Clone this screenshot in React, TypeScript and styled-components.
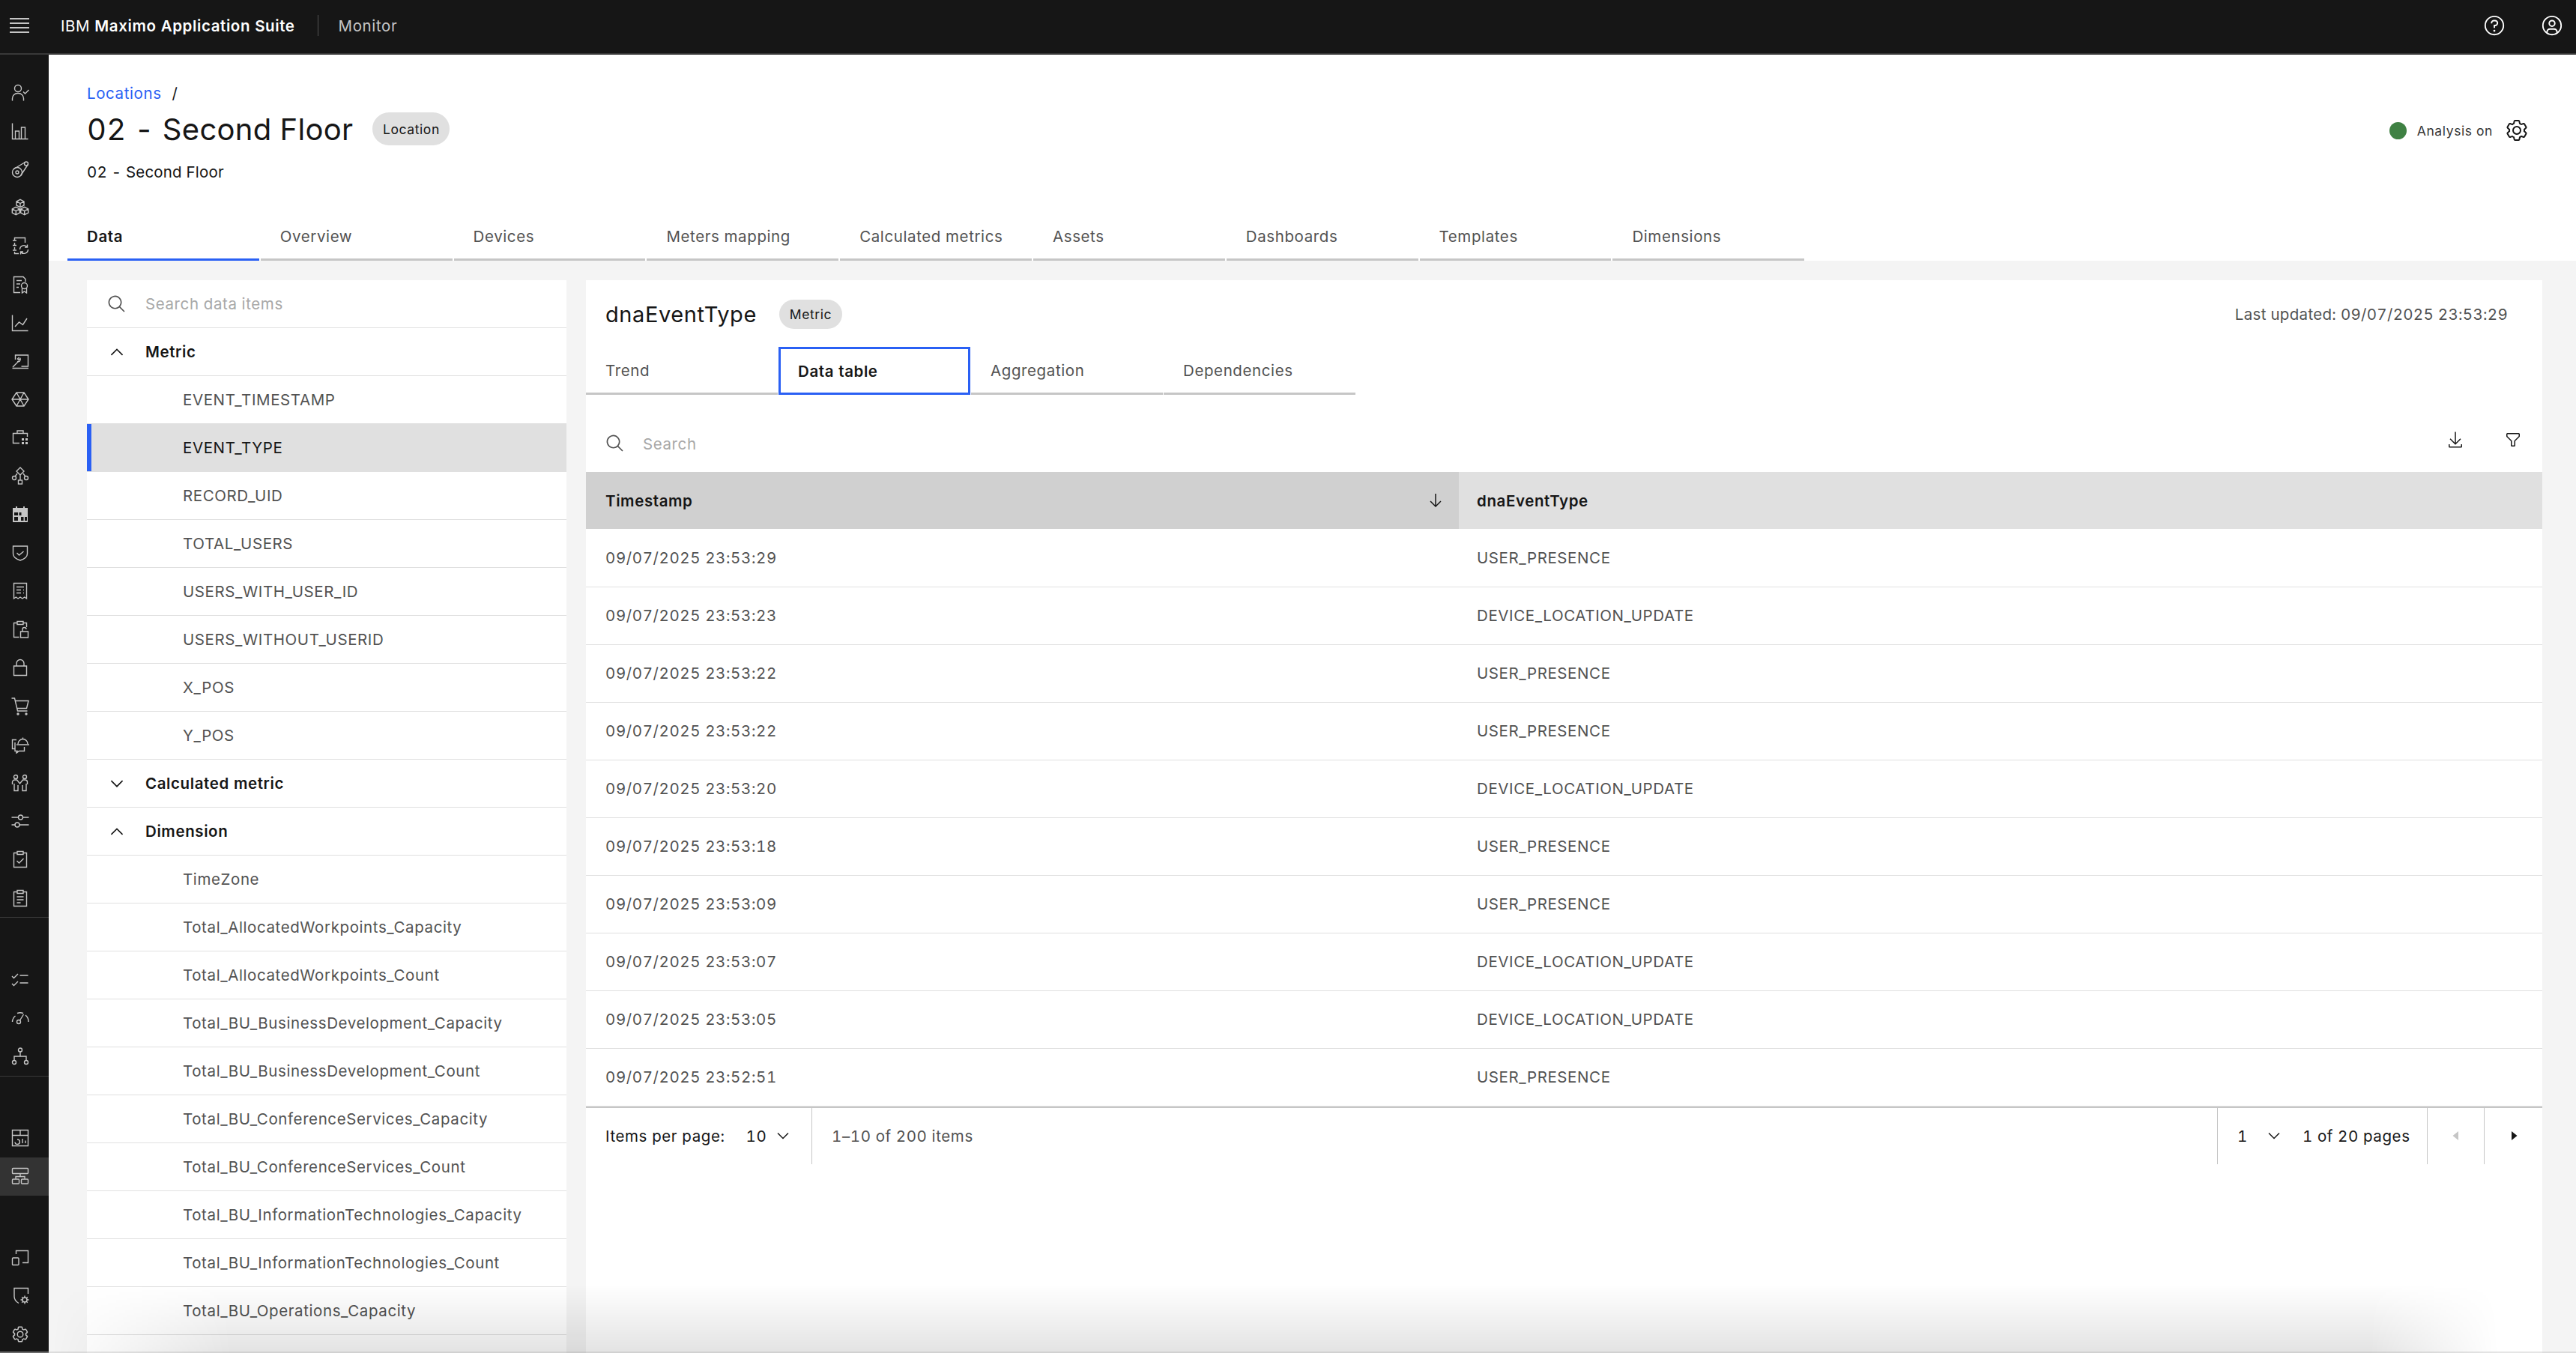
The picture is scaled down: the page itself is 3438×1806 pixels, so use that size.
import { ReactNode } from 'react';
import styled, { createGlobalStyle } from 'styled-components';

const GlobalStyle = createGlobalStyle`
  html, body, #root {
    margin: 0;
    height: 100%;
  }

  body {
    font-family: 'Inter', 'Noto Sans', sans-serif;
    font-size: 20.5px;
    font-variant-numeric: tabular-nums;
    letter-spacing: 0.6px;
    color: #161616;
    background: #f4f4f4;
    overflow: hidden;
  }

  * {
    box-sizing: border-box;
  }
`;

const BLUE = '#2a60f4';

const Page = styled.div`
  display: flex;
  flex-direction: column;
  height: 100vh;
  overflow: hidden;
  position: relative;
`;

const TopBar = styled.header`
  display: flex;
  align-items: center;
  flex: none;
  height: 73px;
  padding: 0 17px 3px 13px;
  background: #161616;
  border-bottom: 2px solid #393939;
  color: #fff;
`;

const Hamburger = styled.svg`
  width: 26px;
  height: 20px;
  margin-right: 42px;
`;

const Product = styled.span`
  b {
    font-weight: 600;
  }
`;

const BarDivider = styled.span`
  width: 1px;
  height: 28px;
  margin: 0 27px 0 30px;
  background: #525252;
`;

const AppName = styled.span`
  color: #c6c6c6;
`;

const BarActions = styled.div`
  display: flex;
  gap: 47px;
  margin-left: auto;
`;

const Body = styled.div`
  display: flex;
  flex: 1;
  min-height: 0;
`;

const Rail = styled.nav`
  display: flex;
  flex-direction: column;
  flex: none;
  width: 65px;
  background: #161616;
  border-bottom: 2px solid #525252;
`;

const RailGroup = styled.div<{ $top: number; $divider?: boolean }>`
  padding-top: ${(p) => p.$top}px;
  border-bottom: ${(p) => (p.$divider ? '1px solid #393939' : 'none')};
`;

const RailItem = styled.div<{ $active?: boolean }>`
  display: flex;
  align-items: center;
  height: 51.2px;
  padding-left: 15px;
  background: ${(p) => (p.$active ? '#333333' : 'transparent')};
`;

const RailSvg = styled.svg`
  width: 24px;
  height: 24px;
  fill: none;
  stroke: #c6c6c6;
  stroke-width: 1.4;
`;

const Main = styled.main`
  display: flex;
  flex-direction: column;
  flex: 1;
  min-width: 0;
`;

const PageHead = styled.section`
  flex: none;
  padding: 37px 0 0 25px;
  background: #fff;
`;

const HeadInfo = styled.div`
  padding-left: 26px;
`;

const Crumbs = styled.div`
  display: flex;
  gap: 14px;
  height: 30px;
  line-height: 30px;
`;

const CrumbLink = styled.a`
  color: ${BLUE};
`;

const TitleRow = styled.div`
  display: flex;
  align-items: center;
  height: 64px;
  padding-right: 63px;
`;

const Title = styled.h1`
  margin: 0 26px 0 0;
  font-size: 40px;
  font-weight: 400;
  letter-spacing: 0.3px;
`;

const Tag = styled.span<{ $height: number; $width: number }>`
  display: inline-flex;
  align-items: center;
  justify-content: center;
  width: ${(p) => p.$width}px;
  height: ${(p) => p.$height}px;
  border-radius: ${(p) => p.$height / 2}px;
  background: #e0e0e0;
  font-size: 17.5px;
`;

const Status = styled.div`
  display: flex;
  align-items: center;
  margin: 4px 0 0 auto;
  color: #393939;
  font-size: 17.5px;
`;

const StatusDot = styled.span`
  width: 23px;
  height: 23px;
  margin-right: 14px;
  border-radius: 50%;
  background: #3f8143;
`;

const GearButton = styled.span`
  display: flex;
  margin-left: 16px;
`;

const Description = styled.p`
  margin: 11px 0 0;
  line-height: 30px;
  letter-spacing: 0.2px;
`;

const TabStrip = styled.div<{ $top: number; $cell: number; $gap: number }>`
  display: flex;
  gap: ${(p) => p.$gap}px;
  margin-top: ${(p) => p.$top}px;

  > * {
    width: ${(p) => p.$cell}px;
  }
`;

const Tab = styled.div<{ $selected?: boolean; $focused?: boolean; $height: number; $shift: number }>`
  display: flex;
  align-items: center;
  flex: none;
  height: ${(p) => p.$height}px;
  padding: ${(p) => p.$shift}px 26px 0;
  color: ${(p) => (p.$selected || p.$focused ? '#161616' : '#525252')};
  font-weight: ${(p) => (p.$selected || p.$focused ? 600 : 400)};
  border-bottom: 3px solid ${(p) => (p.$selected ? BLUE : '#c6c6c6')};
  ${(p) => p.$focused && `border: 3px solid ${BLUE}; padding: 0 23px;`}
`;

const Workspace = styled.div`
  display: grid;
  grid-template-columns: 640px 1fr;
  gap: 26px;
  flex: 1;
  min-height: 0;
  padding: 26px 45px 0 51px;
`;

const ItemPanel = styled.aside`
  overflow: hidden;
  background: #fff;
`;

const ItemRow = styled.div<{ $kind: 'head' | 'leaf' | 'search'; $selected?: boolean }>`
  display: flex;
  align-items: center;
  gap: 25px;
  position: relative;
  height: 64px;
  padding-left: ${(p) => (p.$kind === 'leaf' ? 128 : 27)}px;
  background: ${(p) => (p.$selected ? '#e0e0e0' : '#fff')};
  border-bottom: 1px solid #e0e0e0;
  color: ${(p) => (p.$kind === 'leaf' && !p.$selected ? '#525252' : '#161616')};
  font-weight: ${(p) => (p.$kind === 'head' ? 600 : 400)};

  &::before {
    content: ${(p) => (p.$selected ? "''" : 'none')};
    position: absolute;
    left: 0;
    top: 0;
    bottom: 0;
    width: 6px;
    background: ${BLUE};
  }
`;

const Placeholder = styled.span`
  color: #a8a8a8;
`;

const SearchLabel = styled(Placeholder)`
  margin-left: 24px;
`;

const DataPanel = styled.section`
  display: flex;
  flex-direction: column;
  min-width: 0;
  background: #fff;
`;

const MetricHead = styled.div`
  display: flex;
  align-items: center;
  flex: none;
  height: 89px;
  padding: 1px 46px 0 26px;
`;

const MetricName = styled.h2`
  margin: 0 30px 0 0;
  font-size: 29px;
  font-weight: 400;
`;

const Updated = styled.span`
  margin-left: auto;
  color: #525252;
  letter-spacing: 0.3px;
`;

const TableTools = styled.div`
  display: flex;
  align-items: center;
  flex: none;
  height: 103px;
  padding: 27px 27px 0 26px;
`;

const ToolIcons = styled.div`
  display: flex;
  gap: 53px;
  margin: -11px 0 0 auto;
`;

const DataTable = styled.table`
  width: 100%;
  flex: none;
  table-layout: fixed;
  border-collapse: collapse;
`;

const HeadCell = styled.th<{ $sorted?: boolean }>`
  height: 76px;
  padding: 0 19px 0 ${(p) => (p.$sorted ? 26 : 24)}px;
  background: ${(p) => (p.$sorted ? '#d0d0d0' : '#e0e0e0')};
  font-weight: 600;
  text-align: left;
  width: ${(p) => (p.$sorted ? '1165px' : 'auto')};
`;

const HeadInner = styled.div`
  display: flex;
  align-items: center;
  justify-content: space-between;
`;

const Cell = styled.td<{ $first?: boolean }>`
  height: 77px;
  padding: 0 0 0 ${(p) => (p.$first ? 26 : 24)}px;
  border-bottom: 1px solid #e0e0e0;
  color: #525252;
`;

const Pager = styled.div`
  display: flex;
  align-items: stretch;
  flex: none;
  height: 77px;
  border-top: 2px solid #c6c6c6;
`;

const PagerBlock = styled.div<{ $width?: number; $divider?: boolean; $pad?: number; $muted?: boolean }>`
  display: flex;
  align-items: center;
  width: ${(p) => (p.$width ? `${p.$width}px` : 'auto')};
  padding-left: ${(p) => p.$pad ?? 0}px;
  border-right: ${(p) => (p.$divider ? '1px solid #c6c6c6' : 'none')};
  color: ${(p) => (p.$muted ? '#525252' : '#161616')};
`;

const PagerLabel = styled.span`
  margin-right: 28px;
`;

const PagerRight = styled.div`
  display: flex;
  align-items: stretch;
  margin-left: auto;
  border-left: 1px solid #c6c6c6;
`;

const PagerButton = styled.div<{ $width: number }>`
  display: flex;
  align-items: center;
  justify-content: center;
  width: ${(p) => p.$width}px;
  border-left: 1px solid #c6c6c6;
`;

const Select = styled.span<{ $gap: number; $after: number }>`
  display: inline-flex;
  align-items: center;
  gap: ${(p) => p.$gap}px;
  margin-right: ${(p) => p.$after}px;
`;

const BottomFade = styled.div`
  position: absolute;
  left: 0;
  right: 0;
  bottom: 0;
  height: 92px;
  pointer-events: none;

  &::before {
    content: '';
    position: absolute;
    inset: 0;
    background: linear-gradient(to top, rgba(0, 0, 0, 0.11), rgba(0, 0, 0, 0));
    mask-image: linear-gradient(to right, transparent 2%, #000 9%, #000 92%, transparent 97%);
  }

  &::after {
    content: '';
    position: absolute;
    left: 0;
    right: 0;
    bottom: 0;
    height: 2px;
    background: rgba(170, 170, 170, 0.3);
  }
`;

const GlyphSvg = styled.svg`
  flex: none;
`;

type GlyphProps = { size?: number; color?: string; children: ReactNode };

const Glyph = ({ size = 24, color = '#161616', children }: GlyphProps) => (
  <GlyphSvg width={size} height={size} viewBox="0 0 32 32" fill={color}>
    {children}
  </GlyphSvg>
);

const GEAR = (
  <>
    <path d="M27,16.76c0-.25,0-.5,0-.76s0-.51,0-.77l1.92-1.68A2,2,0,0,0,29.3,11L26.94,7a2,2,0,0,0-1.73-1,2,2,0,0,0-.64.1l-2.43.82a11.35,11.35,0,0,0-1.31-.75l-.51-2.52a2,2,0,0,0-2-1.61H13.64a2,2,0,0,0-2,1.61l-.51,2.52a11.48,11.48,0,0,0-1.32.75L7.43,6.06A2,2,0,0,0,6.79,6,2,2,0,0,0,5.06,7L2.7,11a2,2,0,0,0,.41,2.51L5,15.24c0,.25,0,.5,0,.76s0,.51,0,.77L3.11,18.45A2,2,0,0,0,2.7,21L5.06,25a2,2,0,0,0,1.73,1,2,2,0,0,0,.64-.1l2.43-.82a11.35,11.35,0,0,0,1.31.75l.51,2.52a2,2,0,0,0,2,1.61h4.72a2,2,0,0,0,2-1.61l.51-2.52a11.48,11.48,0,0,0,1.32-.75l2.42.82a2,2,0,0,0,.64.1,2,2,0,0,0,1.73-1L29.3,21a2,2,0,0,0-.41-2.51ZM25.21,24l-3.43-1.16a8.86,8.86,0,0,1-2.71,1.57L18.36,28H13.64l-.71-3.55a9.36,9.36,0,0,1-2.7-1.57L6.79,24,4.43,20l2.72-2.4a8.9,8.9,0,0,1,0-3.13L4.43,12,6.79,8l3.43,1.16a8.86,8.86,0,0,1,2.71-1.57L13.64,4h4.72l.71,3.55a9.36,9.36,0,0,1,2.7,1.57L25.21,8,27.57,12l-2.72,2.4a8.9,8.9,0,0,1,0,3.13L27.57,20Z" />
    <path d="M16,22a6,6,0,1,1,6-6A5.94,5.94,0,0,1,16,22Zm0-10a3.91,3.91,0,0,0-4,4,3.91,3.91,0,0,0,4,4,3.91,3.91,0,0,0,4-4A3.91,3.91,0,0,0,16,12Z" />
  </>
);

const SearchGlyph = () => (
  <Glyph size={26} color="#525252">
    <path d="M29,27.5859l-7.5521-7.5521a11.0177,11.0177,0,1,0-1.4141,1.4141L27.5859,29ZM4,13a9,9,0,1,1,9,9A9.01,9.01,0,0,1,4,13Z" />
  </Glyph>
);

const ChevronDown = ({ size = 24 }: { size?: number }) => (
  <Glyph size={size}>
    <path d="M16 22L6 12l1.4-1.4 8.6 8.6 8.6-8.6L26 12z" />
  </Glyph>
);

const ChevronUp = () => (
  <Glyph size={26}>
    <path d="M16 10l10 10-1.4 1.4L16 12.8 7.4 21.4 6 20z" />
  </Glyph>
);

const cube = (x: number, y: number) =>
  `M${x} ${y - 5.2}l5 2.6v5.2l-5 2.6-5-2.6v-5.2zM${x - 5} ${y - 2.6}l5 2.6 5-2.6M${x} ${y}v5.2`;

const RAIL_TOP: ReactNode[] = [
  <>
    <circle cx="9" cy="6" r="4.5" />
    <path d="M1.5 22.5v-3a7 7 0 0 1 7-7h1a7 7 0 0 1 7 7v3M16 10.5l2.5 2.5 5-5" />
  </>,
  <path d="M1.5 1.5v21h21M5.5 22V12h5v10M13.5 22V7h5v15" />,
  <>
    <circle cx="8" cy="16" r="6.5" />
    <circle cx="8" cy="16" r="2" />
    <circle cx="20" cy="4.5" r="2.5" />
    <path d="M3.5 11.5L18.5 2.5M12.5 20.5L22 6" />
  </>,
  <path d={`${cube(12, 6.5)}${cube(6.3, 16.5)}${cube(17.7, 16.5)}`} />,
  <path d="M4.5 5V1.5h14V8M4.5 8v3M4.5 14v3M4.5 20v2.5H10M2 5h5M2 11.5h5M2 18h5M11.5 17a5.5 5.5 0 0 1 10-3M22.5 17a5.5 5.5 0 0 1-10 3M21.5 10.5V14H18M12.5 23.5V20H16" />,
  <>
    <path d="M12 22.5H3.5V1.5h12.5l3 3V8M7 6.5h7M7 11h5M7 15.5h3M14.5 16.5V23l3-2 3 2v-6.5" />
    <circle cx="17.5" cy="13.5" r="4" />
  </>,
  <path d="M1.5 1.5v21h21M5 17l5.5-6 5 3.5L21 6" />,
  <path d="M5.5 10V4h17v15h-9M1.5 21.5h21.5M2 20l8-8M8 12.5a3 3 0 0 0 4-4l-2 2-1.5-1.5 2-2" />,
  <path d="M7 3h10l6 9-6 9H7L1 12zM7 3l10 18M17 3L7 21M1 12h22" />,
  <>
    <path d="M11 19.5H2.5V6.5h19V11M8 6.5V3h8v3.5" />
    <path fill="#c6c6c6" stroke="none" d="M14 13h3v3h-3zM19 13h3v3h-3zM14 18h3v3h-3zM19 18h3v3h-3z" />
  </>,
  <>
    <path d="M12 1l5 5-5 5-5-5zM8 9l-2.5 3.5M16 9l2.5 3.5M12 11v7" />
    <circle cx="4" cy="15" r="2.5" />
    <circle cx="20" cy="15" r="2.5" />
    <rect x="9.5" y="18" width="5" height="5" />
  </>,
  <>
    <path fill="#c6c6c6" stroke="none" d="M2 3h4V1h2v2h8V1h2v2h4v19H2z" />
    <path fill="#161616" stroke="none" d="M4 9h5v4H4zM10.5 9h3v4h-3zM4 15h5v5H4zM13 15h3.5v5H13zM18 15h3v5h-3z" />
  </>,
  <path d="M2.5 3h19v10c0 5-5 7.5-9.5 9-4.5-1.5-9.5-4-9.5-9zM7.5 12l3 3 6-5" />,
  <path d="M3.5 1.5h17V22l-2.8-2-2.8 2-2.9-2-2.9 2-2.8-2-2.8 2zM7 6.5h10M7 10.5h6M7 14.5h6M16 10.5h1M16 14.5h1" />,
  <path d="M8 3.5H3.5v19h7M16 3.5h4.5V9M8 1.5h8v4H8zM12.5 15h10v8h-10zM15 15v-3a2.5 2.5 0 0 1 5 0" />,
  <path d="M3.5 10h17v12.5h-17zM7 10V6.5a5 5 0 0 1 10 0V10" />,
  <>
    <path d="M0.5 1h4l4 17h13M5.5 4.5H23l-2.5 10H8" />
    <circle cx="9" cy="22" r="1" fill="#c6c6c6" />
    <circle cx="20" cy="22" r="1" fill="#c6c6c6" />
  </>,
  <path d="M7 5.5H1.5v12h3M5 9v11.5h3l-1.5 3 4-3h7V15M9 11a6.5 6.5 0 0 1 13 0M7 12h17M15.5 4.5v-2" />,
  <>
    <circle cx="6" cy="4" r="2.5" />
    <circle cx="18" cy="4" r="2.5" />
    <path d="M1.5 14v-3a3 3 0 0 1 3-3h3l4 5 4-5h3a3 3 0 0 1 3 3v3M4 13v9.5h5V15M20 13v9.5h-5V15" />
  </>,
  <>
    <path d="M0.5 7h9M15.5 7h8M0.5 17h5M11 17h12.5" />
    <circle cx="12.5" cy="7" r="3" />
    <circle cx="8" cy="17" r="3" />
  </>,
  <path d="M8 3.5H3.5v19h17v-19H16M8 1.5h8v4H8zM7.5 14l3 3 6-6" />,
  <path d="M8 3.5H3.5v19h17v-19H16M8 1.5h8v4H8zM7.5 10h9M7.5 14h9M7.5 18h5" />,
];

const RAIL_TOOLS: ReactNode[] = [
  <path d="M1 7l2.5 2.5L9 4M1 17l2.5 2.5L9 14M11.5 6h11M11.5 16h11" />,
  <>
    <path d="M1.5 17a11 11 0 0 1 4-8M8 5.5a11 11 0 0 1 8 0M19 8a11 11 0 0 1 4 9M11.5 15l5-8" />
    <circle cx="10" cy="17" r="2.5" />
  </>,
  <>
    <circle cx="12" cy="3.5" r="2.5" />
    <circle cx="4" cy="20" r="2.5" />
    <circle cx="20" cy="20" r="2.5" />
    <path d="M12 6v6M4 17.5V12h16v5.5" />
  </>,
];

const RAIL_DASHBOARD: ReactNode = (
  <path d="M1.5 1.5h21v21h-21zM1.5 8.5h21M12 1.5v7M8 14a3.2 3.2 0 1 1-3 3.5M15 19v-6M19 19v-3.5" />
);

const RAIL_HIERARCHY: ReactNode = (
  <>
    <rect x="1.5" y="1.5" width="21" height="7" rx="1" />
    <path d="M12 8.5v4M6 15.5v-3h12v3" />
    <rect x="1.5" y="16" width="9" height="6" rx="1" />
    <rect x="13.5" y="16" width="9" height="6" rx="1" />
  </>
);

const RAIL_ADMIN: ReactNode[] = [
  <>
    <path d="M6.5 7V2.5h16v16H15" />
    <rect x="1.5" y="12" width="8.5" height="9.5" rx="1" />
  </>,
  <>
    <path d="M22.5 9V1.5H4v11c0 3.5 2.5 7 6 9" />
    <circle cx="18" cy="17" r="3" />
    <path d="M18 11.5V14M18 20v2.5M12.5 17H15M21 17h2.5M14.2 13.2l1.7 1.7M20.1 19.1l1.7 1.7M14.2 20.8l1.7-1.7M20.1 14.9l1.7-1.7" />
  </>,
];

const RailIcon = ({ children }: { children: ReactNode }) => (
  <RailSvg viewBox="0 0 24 24">{children}</RailSvg>
);

const METRICS = [
  'EVENT_TIMESTAMP',
  'EVENT_TYPE',
  'RECORD_UID',
  'TOTAL_USERS',
  'USERS_WITH_USER_ID',
  'USERS_WITHOUT_USERID',
  'X_POS',
  'Y_POS',
];

const DIMENSIONS = [
  'TimeZone',
  'Total_AllocatedWorkpoints_Capacity',
  'Total_AllocatedWorkpoints_Count',
  'Total_BU_BusinessDevelopment_Capacity',
  'Total_BU_BusinessDevelopment_Count',
  'Total_BU_ConferenceServices_Capacity',
  'Total_BU_ConferenceServices_Count',
  'Total_BU_InformationTechnologies_Capacity',
  'Total_BU_InformationTechnologies_Count',
  'Total_BU_Operations_Capacity',
];

const ROWS = [
  ['09/07/2025 23:53:29', 'USER_PRESENCE'],
  ['09/07/2025 23:53:23', 'DEVICE_LOCATION_UPDATE'],
  ['09/07/2025 23:53:22', 'USER_PRESENCE'],
  ['09/07/2025 23:53:22', 'USER_PRESENCE'],
  ['09/07/2025 23:53:20', 'DEVICE_LOCATION_UPDATE'],
  ['09/07/2025 23:53:18', 'USER_PRESENCE'],
  ['09/07/2025 23:53:09', 'USER_PRESENCE'],
  ['09/07/2025 23:53:07', 'DEVICE_LOCATION_UPDATE'],
  ['09/07/2025 23:53:05', 'DEVICE_LOCATION_UPDATE'],
  ['09/07/2025 23:52:51', 'USER_PRESENCE'],
];

const PAGE_TABS = [
  'Data',
  'Overview',
  'Devices',
  'Meters mapping',
  'Calculated metrics',
  'Assets',
  'Dashboards',
  'Templates',
  'Dimensions',
];

const DATA_TABS = ['Trend', 'Data table', 'Aggregation', 'Dependencies'];

const App = () => (
  <Page>
    <GlobalStyle />
    <TopBar>
      <Hamburger viewBox="0 0 26 20" stroke="#fff" strokeWidth="1.5">
        <path d="M0 1h26M0 7h26M0 13h26M0 19h26" />
      </Hamburger>
      <Product>
        IBM <b>Maximo Application Suite</b>
      </Product>
      <BarDivider />
      <AppName>Monitor</AppName>
      <BarActions>
        <Glyph size={30} color="#fff">
          <path d="M16,2A14,14,0,1,0,30,16,14,14,0,0,0,16,2Zm0,26A12,12,0,1,1,28,16,12,12,0,0,1,16,28Z" />
          <circle cx="16" cy="23.5" r="1.5" />
          <path d="M17,8H15.5A4.49,4.49,0,0,0,11,12.5V13h2v-.5A2.5,2.5,0,0,1,15.5,10H17a2.5,2.5,0,0,1,0,5H15v4.5h2V17a4.5,4.5,0,0,0,0-9Z" />
        </Glyph>
        <Glyph size={30} color="#fff">
          <path d="M16 8a5 5 0 1 0 5 5 5 5 0 0 0-5-5zm0 8a3 3 0 1 1 3-3 3.0034 3.0034 0 0 1-3 3z" />
          <path d="M16 2a14 14 0 1 0 14 14A14.0158 14.0158 0 0 0 16 2zm-6 24.3765V25a3.0033 3.0033 0 0 1 3-3h6a3.0033 3.0033 0 0 1 3 3v1.3765a11.8989 11.8989 0 0 1-12 0zm13.9925-1.4507A5.0016 5.0016 0 0 0 19 20h-6a5.0016 5.0016 0 0 0-4.9925 4.9258 12 12 0 1 1 15.985 0z" />
        </Glyph>
      </BarActions>
    </TopBar>
    <Body>
      <Rail>
        <RailGroup $top={25} $divider>
          {RAIL_TOP.map((icon, index) => (
            <RailItem key={index}>
              <RailIcon>{icon}</RailIcon>
            </RailItem>
          ))}
        </RailGroup>
        <RailGroup $top={57} $divider>
          {RAIL_TOOLS.map((icon, index) => (
            <RailItem key={index}>
              <RailIcon>{icon}</RailIcon>
            </RailItem>
          ))}
        </RailGroup>
        <RailGroup $top={57}>
          <RailItem>
            <RailIcon>{RAIL_DASHBOARD}</RailIcon>
          </RailItem>
          <RailItem $active>
            <RailIcon>{RAIL_HIERARCHY}</RailIcon>
          </RailItem>
        </RailGroup>
        <RailGroup $top={57}>
          {RAIL_ADMIN.map((icon, index) => (
            <RailItem key={index}>
              <RailIcon>{icon}</RailIcon>
            </RailItem>
          ))}
          <RailItem>
            <Glyph size={24} color="#c6c6c6">
              {GEAR}
            </Glyph>
          </RailItem>
        </RailGroup>
      </Rail>
      <Main>
        <PageHead>
          <HeadInfo>
            <Crumbs>
              <CrumbLink>Locations</CrumbLink>
              <span>/</span>
            </Crumbs>
            <TitleRow>
              <Title>02 - Second Floor</Title>
              <Tag $width={103} $height={44}>
                Location
              </Tag>
              <Status>
                <StatusDot />
                Analysis on
                <GearButton>
                  <Glyph size={32}>{GEAR}</Glyph>
                </GearButton>
              </Status>
            </TitleRow>
            <Description>02 - Second Floor</Description>
          </HeadInfo>
          <TabStrip $top={36} $cell={255.8} $gap={2}>
            {PAGE_TABS.map((tab, index) => (
              <Tab key={tab} $selected={index === 0} $height={67} $shift={5}>
                {tab}
              </Tab>
            ))}
          </TabStrip>
        </PageHead>
        <Workspace>
          <ItemPanel>
            <ItemRow $kind="search">
              <SearchGlyph />
              <Placeholder>Search data items</Placeholder>
            </ItemRow>
            <ItemRow $kind="head">
              <ChevronUp />
              Metric
            </ItemRow>
            {METRICS.map((name) => (
              <ItemRow key={name} $kind="leaf" $selected={name === 'EVENT_TYPE'}>
                {name}
              </ItemRow>
            ))}
            <ItemRow $kind="head">
              <ChevronDown size={26} />
              Calculated metric
            </ItemRow>
            <ItemRow $kind="head">
              <ChevronUp />
              Dimension
            </ItemRow>
            {DIMENSIONS.map((name) => (
              <ItemRow key={name} $kind="leaf">
                {name}
              </ItemRow>
            ))}
          </ItemPanel>
          <DataPanel>
            <MetricHead>
              <MetricName>dnaEventType</MetricName>
              <Tag $width={84} $height={39}>
                Metric
              </Tag>
              <Updated>Last updated: 09/07/2025 23:53:29</Updated>
            </MetricHead>
            <TabStrip $top={0} $cell={256} $gap={1}>
              {DATA_TABS.map((tab, index) => (
                <Tab key={tab} $focused={index === 1} $height={64} $shift={2}>
                  {tab}
                </Tab>
              ))}
            </TabStrip>
            <TableTools>
              <SearchGlyph />
              <SearchLabel>Search</SearchLabel>
              <ToolIcons>
                <Glyph>
                  <path d="M26 15l-1.41-1.41L17 21.17V2h-2v19.17l-7.59-7.58L6 15l10 10 10-10z" />
                  <path d="M26 24v4H6v-4H4v4a2 2 0 0 0 2 2h20a2 2 0 0 0 2-2v-4z" />
                </Glyph>
                <Glyph>
                  <path d="M18,28H14a2,2,0,0,1-2-2V18.41L4.59,11A2,2,0,0,1,4,9.59V6A2,2,0,0,1,6,4H26a2,2,0,0,1,2,2V9.59A2,2,0,0,1,27.41,11L20,18.41V26A2,2,0,0,1,18,28ZM6,6V9.59l8,8V26h4V17.59l8-8V6Z" />
                </Glyph>
              </ToolIcons>
            </TableTools>
            <DataTable>
              <thead>
                <tr>
                  <HeadCell $sorted>
                    <HeadInner>
                      Timestamp
                      <Glyph>
                        <path d="M24.59 16.59L17 24.17V4h-2v20.17l-7.59-7.58L6 18l10 10 10-10z" />
                      </Glyph>
                    </HeadInner>
                  </HeadCell>
                  <HeadCell>dnaEventType</HeadCell>
                </tr>
              </thead>
              <tbody>
                {ROWS.map(([time, type], index) => (
                  <tr key={index}>
                    <Cell $first>{time}</Cell>
                    <Cell>{type}</Cell>
                  </tr>
                ))}
              </tbody>
            </DataTable>
            <Pager>
              <PagerBlock $width={302} $pad={26} $divider>
                <PagerLabel>Items per page:</PagerLabel>
                <Select $gap={10} $after={0}>
                  10
                  <ChevronDown />
                </Select>
              </PagerBlock>
              <PagerBlock $pad={26} $muted>
                1–10 of 200 items
              </PagerBlock>
              <PagerRight>
                <PagerBlock $pad={26} $width={279}>
                  <Select $gap={23} $after={26}>
                    1
                    <ChevronDown />
                  </Select>
                  1 of 20 pages
                </PagerBlock>
                <PagerButton $width={76}>
                  <Glyph color="#c6c6c6">
                    <path d="M20 24l-10-8 10-8z" />
                  </Glyph>
                </PagerButton>
                <PagerButton $width={78}>
                  <Glyph>
                    <path d="M12 8l10 8-10 8z" />
                  </Glyph>
                </PagerButton>
              </PagerRight>
            </Pager>
          </DataPanel>
        </Workspace>
      </Main>
    </Body>
    <BottomFade />
  </Page>
);

export default App;
